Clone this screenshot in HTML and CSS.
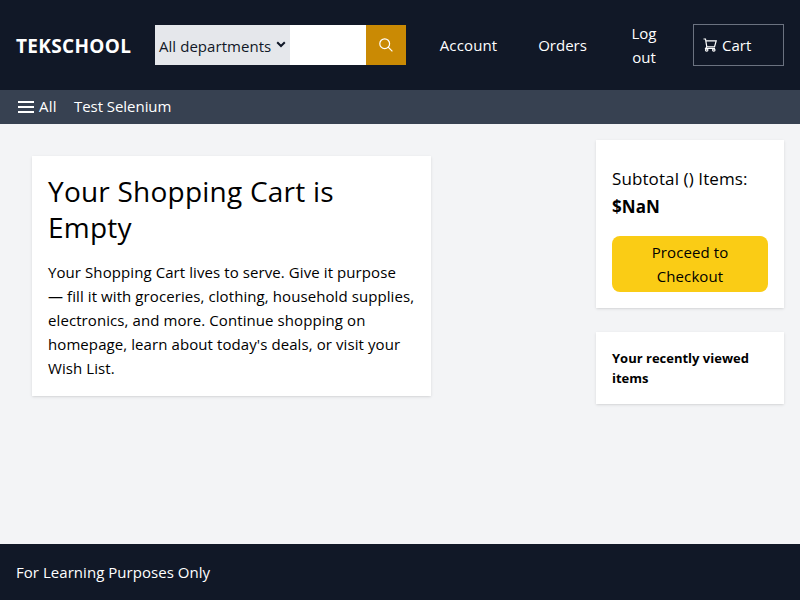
FILE: index.html
```html
<!DOCTYPE html>
<html lang="en">
<head>
<meta charset="utf-8">
<title>TEKSCHOOL</title>
<link rel="stylesheet" href="styles.css">
</head>
<body>
<header class="top">
  <a class="logo">TEKSCHOOL</a>
  <div class="search">
    <div class="departments"><span>All departments</span>
      <svg class="chevron" viewBox="0 0 10 7"><path d="M1.2 1.2 5 5l3.800-3.800"/></svg>
    </div>
    <div class="query"></div>
    <div class="search-button">
      <svg viewBox="0 0 14 14"><circle cx="5.700" cy="5.700" r="4.900"/><path d="m9.200 9.200 4.200 4.200"/></svg>
    </div>
  </div>
  <a class="link account">Account</a>
  <a class="link orders">Orders</a>
  <a class="link logout">Log<br>out</a>
  <a class="cart">
    <svg viewBox="0 0 14 14"><path d="M.5 1h2l1.300 7.800h7.700l1.700-6H2.900M3.800 8.800 2.700 10.500h9.300"/><circle cx="3.700" cy="12" r="1.200"/><circle cx="10.800" cy="12" r="1.200"/></svg>
    <span>Cart</span>
  </a>
</header>
<nav class="menu">
  <svg class="bars" viewBox="0 0 16 12"><path d="M0 1h16M0 6h16M0 11h16"/></svg>
  <span class="all">All</span><span class="test">Test Selenium</span>
</nav>
<main>
  <section class="card empty">
    <h1>Your Shopping Cart is<br>Empty</h1>
    <p>Your Shopping Cart lives to serve. Give it purpose<br>— fill it with groceries, clothing, household supplies,<br>electronics, and more. Continue shopping on<br>homepage, learn about today's deals, or visit your<br>Wish List.</p>
  </section>
  <aside>
    <section class="card summary">
      <div class="subtotal">Subtotal () Items:<br><b>$NaN</b></div>
      <button>Proceed to<br>Checkout</button>
    </section>
    <section class="card recent">Your recently viewed<br>items</section>
  </aside>
</main>
<footer>For Learning Purposes Only</footer>
</body>
</html>
```
FILE: styles.css
```css
* { box-sizing: border-box; }
body { margin: 0; height: 600px; display: flex; flex-direction: column; background: #f3f4f6; color: #000; font: 15px/24px "Open Sans", "Noto Sans", sans-serif; }
svg { fill: none; stroke: currentColor; flex: none; }
.top { height: 90px; display: flex; align-items: center; background: #111827; color: #fff; padding-left: 16px; flex: none; }
.logo { width: 139px; font-size: 19px; letter-spacing: .33px; font-weight: 700; line-height: 28px; padding-top: 2px; }
.search { width: 251px; height: 40px; display: flex; }
.departments { width: 135px; background: #e5e7eb; color: #111827; display: flex; align-items: center; justify-content: space-between; padding: 2px 4px 0; white-space: nowrap; letter-spacing: .05px; }
.chevron { width: 10px; height: 7px; stroke-width: 2; margin-top: -3px; }
.query { flex: 1; background: #fff; }
.search-button { width: 40px; background: #ca8a04; display: flex; align-items: center; justify-content: center; }
.search-button svg { width: 14px; height: 14px; stroke-width: 1.2; }
.link { text-align: center; margin-top: -1px; }
.account { width: 59px; margin-left: 33px; letter-spacing: .15px; }
.orders { width: 49px; margin-left: 40px; }
.logout { width: 30px; margin-left: 42px; }
.cart { width: 91px; height: 42px; margin-left: 34px; border: 1px solid #6b7280; padding-left: 9px; display: flex; align-items: center; gap: 5px; }
.cart svg { width: 14px; height: 14px; stroke-width: 1.2; }
.menu { height: 34px; flex: none; background: #374151; color: #fff; display: flex; align-items: center; padding-left: 18px; }
.menu span { margin-top: -2px; }
.bars { width: 16px; height: 12px; stroke-width: 2; }
.all { width: 40px; padding-left: 5px; letter-spacing: .3px; }
.test { letter-spacing: -.05px; }
main { flex: 1; display: flex; justify-content: space-between; padding: 16px 16px 0 32px; align-items: flex-start; }
.card { background: #fff; padding: 16px; box-shadow: 0 1px 3px rgba(0,0,0,.1), 0 1px 2px -1px rgba(0,0,0,.1); white-space: nowrap; }
.empty { width: 399px; height: 240px; margin-top: 16px; }
h1 { margin: 0 0 15px; font-size: 28px; font-weight: 400; line-height: 36px; letter-spacing: .23px; padding-top: 1px; }
p { margin: 0; letter-spacing: .085px; }
aside { width: 188px; }
.summary { height: 168px; padding-top: 24px; }
.subtotal { font-size: 17px; line-height: 28px; height: 72px; letter-spacing: .1px; padding-top: 1px; }
button { display: block; width: 156px; height: 56px; padding: 4px 0; border: 0; border-radius: 8px; background: #facc15; color: #000; font: inherit; letter-spacing: .1px; }
.recent { height: 72px; margin-top: 24px; font-size: 13px; font-weight: 700; line-height: 20px; }
footer { height: 56px; flex: none; background: #111827; color: #fff; padding: 16px; letter-spacing: .04px; }
```
